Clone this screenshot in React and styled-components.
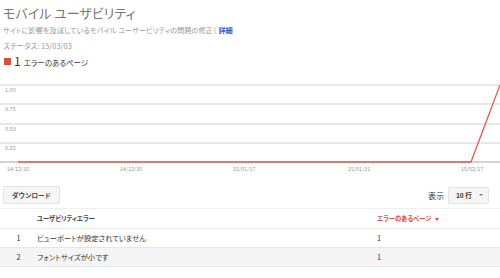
import styled, { createGlobalStyle } from "styled-components";

const GlobalStyle = createGlobalStyle`
  html, body {
    margin: 0;
    padding: 0;
    background: #fff;
  }
  body {
    font-family: "Noto Sans CJK JP", "Noto Sans", sans-serif;
    font-feature-settings: "palt";
  }
`;

const Page = styled.div`
  width: 500px;
  height: 278px;
  overflow: hidden;
`;

const Header = styled.div`
  padding: 4px 0 0 3px;
`;

const Title = styled.h1`
  margin: 0;
  font-size: 13px;
  line-height: 18px;
  font-weight: 400;
  color: #777;
`;

const Subtitle = styled.p`
  margin: 2px 0 0;
  font-size: 7.2px;
  line-height: 13px;
  color: #999;
`;

const Link = styled.a`
  color: #2a62c9;
  font-weight: 700;
  text-decoration: none;
  margin-left: 2px;
`;

const Status = styled.p`
  margin: 2px 0 0;
  font-size: 7.5px;
  line-height: 13px;
  color: #999;
`;

const Legend = styled.div`
  display: flex;
  align-items: center;
  margin-top: 2px;
  padding-left: 1px;
  height: 14px;
`;

const Swatch = styled.span`
  width: 7px;
  height: 7px;
  background: #dd4b39;
  margin-right: 3px;
`;

const LegendCount = styled.span`
  font-size: 12px;
  color: #333;
  margin-right: 3px;
  line-height: 14px;
`;

const LegendLabel = styled.span`
  font-size: 7.5px;
  color: #333;
  margin-top: 2px;
`;

const Chart = styled.svg`
  display: block;
  margin-top: 10px;
`;

const Toolbar = styled.div`
  display: flex;
  justify-content: space-between;
  align-items: center;
  margin-top: 12px;
  padding: 0 11px 0 3px;
`;

const Button = styled.button`
  height: 18px;
  padding: 0 8px;
  font-family: inherit;
  font-size: 6.5px;
  font-weight: 700;
  color: #444;
  background: #f5f5f5;
  border: 1px solid #e3e3e3;
  border-radius: 2px;
`;

const Pager = styled.div`
  display: flex;
  align-items: center;
  gap: 4px;
`;

const PagerLabel = styled.span`
  font-size: 8px;
  color: #333;
`;

const Select = styled.div`
  display: flex;
  align-items: center;
  justify-content: space-between;
  box-sizing: border-box;
  width: 41px;
  height: 17px;
  padding: 0 5px 0 7px;
  background: #f5f5f5;
  border: 1px solid #e3e3e3;
  border-radius: 2px;
  font-size: 6.5px;
  font-weight: 700;
  color: #333;
`;

const Caret = styled.span`
  width: 0;
  height: 0;
  border-left: 2.5px solid transparent;
  border-right: 2.5px solid transparent;
  border-top: 2.5px solid #777;
`;

const Table = styled.table`
  width: 500px;
  margin-top: 4px;
  border-collapse: collapse;
`;

const Th = styled.th`
  height: 19px;
  padding: 0;
  text-align: left;
  font-size: 6.3px;
  font-weight: 700;
  color: ${(p) => (p.$sorted ? "#dd4b39" : "#444")};
  border-top: 1px solid #f0f0f0;
  border-bottom: 1px solid #e6e6e6;
`;

const SortArrow = styled.span`
  display: inline-block;
  margin-left: 4px;
  vertical-align: middle;
  width: 0;
  height: 0;
  border-left: 2px solid transparent;
  border-right: 2px solid transparent;
  border-top: 3px solid #dd4b39;
`;

const Row = styled.tr`
  background: ${(p) => (p.$alt ? "#f5f5f5" : "#fff")};
`;

const Td = styled.td`
  height: 18px;
  padding: 0;
  font-size: 7.3px;
  color: #333;
  text-align: ${(p) => (p.$center ? "center" : "left")};
  border-bottom: 1px solid #e6e6e6;
`;

const gridLines = [
  { y: 7, label: "1.00" },
  { y: 26, label: "0.75" },
  { y: 46, label: "0.50" },
  { y: 65, label: "0.25" },
];

const dates = [
  { x: 18, label: "14/12/16" },
  { x: 131, label: "14/12/30" },
  { x: 244, label: "15/01/17" },
  { x: 359, label: "15/01/31" },
  { x: 472, label: "15/02/17" },
];

const errors = [
  { name: "ビューポートが設定されていません", pages: 1 },
  { name: "フォントサイズが小です", pages: 1 },
];

const App = () => {
  return (
    <Page>
      <GlobalStyle />
      <Header>
        <Title>モバイル ユーザビリティ</Title>
        <Subtitle>
          サイトに影響を及ぼしているモバイル ユーザービリティの問題の修正（<Link href="#">詳細</Link>
        </Subtitle>
        <Status>ステータス: 15/03/03</Status>
        <Legend>
          <Swatch />
          <LegendCount>1</LegendCount>
          <LegendLabel>エラーのあるページ</LegendLabel>
        </Legend>
      </Header>
      <Chart width="500" height="96" viewBox="0 0 500 96">
        {gridLines.map((g) => (
          <g key={g.label}>
            <line x1="0" x2="500" y1={g.y} y2={g.y} stroke="#e0e0e0" strokeWidth="1.4" />
            <text x="5" y={g.y + 7} fontSize="5.5" fill="#999">
              {g.label}
            </text>
          </g>
        ))}
        <line x1="0" x2="500" y1="84" y2="84" stroke="#aaa" strokeWidth="1" />
        <polyline
          points="18,84 471,84 500,7"
          fill="none"
          stroke="#e8584a"
          strokeWidth="1.3"
        />
        {dates.map((d) => (
          <text key={d.label} x={d.x} y="93" fontSize="5.5" fill="#999" textAnchor="middle">
            {d.label}
          </text>
        ))}
      </Chart>
      <Toolbar>
        <Button>ダウンロード</Button>
        <Pager>
          <PagerLabel>表示</PagerLabel>
          <Select>
            10 行
            <Caret />
          </Select>
        </Pager>
      </Toolbar>
      <Table>
        <colgroup>
          <col style={{ width: 37 }} />
          <col style={{ width: 340 }} />
          <col />
        </colgroup>
        <thead>
          <tr>
            <Th />
            <Th>ユーザビリティエラー</Th>
            <Th $sorted>
              エラーのあるページ
              <SortArrow />
            </Th>
          </tr>
        </thead>
        <tbody>
          {errors.map((e, i) => (
            <Row key={e.name} $alt={i % 2 === 1}>
              <Td $center>{i + 1}</Td>
              <Td>{e.name}</Td>
              <Td>{e.pages}</Td>
            </Row>
          ))}
        </tbody>
      </Table>
    </Page>
  );
};

export default App;
